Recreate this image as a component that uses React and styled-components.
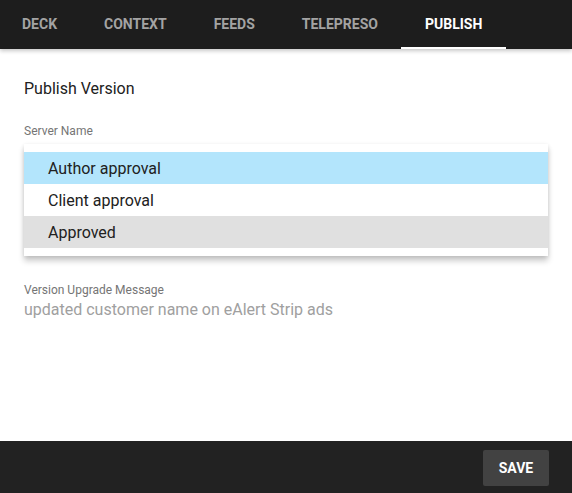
import React from 'react'
import styled, {createGlobalStyle} from 'styled-components'

////////////////////////////// Global page styles
const GlobalStyle = createGlobalStyle`
  html, body {
    margin: 0;
    padding: 0;
    height: 100%;
  }
  body {
    font-family: Roboto, "Liberation Sans", Arial, sans-serif;
    background: #ffffff;
  }
  #root {
    height: 100%;
  }
`

////////////////////////////// Layout parts
const Page = styled.div`
  display: flex;
  flex-direction: column;
  height: 100%;
  overflow: hidden;
`

const TabBar = styled.nav`
  display: flex;
  height: 49px;
  background: #1d1d1d;
  box-shadow: 0 2px 4px rgba(0, 0, 0, 0.22);
  position: relative;
  z-index: 2;
  flex-shrink: 0;
`

const Tab = styled.div`
  display: flex;
  align-items: center;
  padding: 1px 23.5px 0 ${p => p.$first ? '22px' : '23.5px'};
  height: 100%;
  box-sizing: border-box;
  font-size: 14px;
  font-weight: 700;
  color: ${p => p.$active ? '#ffffff' : '#a3a3a3'};
  border-bottom: 2px solid ${p => p.$active ? '#ffffff' : 'transparent'};
  cursor: pointer;
`

const Content = styled.main`
  flex: 1;
  padding: 30px 24px 0 24px;
`

const Title = styled.h2`
  margin: 0;
  font-size: 16px;
  line-height: 20px;
  font-weight: 400;
  color: #212121;
`

const FieldLabel = styled.label`
  display: block;
  margin-top: ${p => p.$gap}px;
  font-size: 12px;
  line-height: 16px;
  color: #757575;
`

const Menu = styled.ul`
  list-style: none;
  margin: 5px 0 0 0;
  padding: 8px 0;
  background: #ffffff;
  box-shadow: 0 5px 6px rgba(0, 0, 0, 0.2), 0 1px 4px rgba(0, 0, 0, 0.1);
`

const MenuItem = styled.li`
  display: flex;
  align-items: center;
  height: 32px;
  padding: 0 24px;
  font-size: 16px;
  color: #212121;
  background: ${p => p.$selected ? '#b3e5fc' : p.$hover ? '#e0e0e0' : 'transparent'};
  cursor: pointer;
`

const MessageText = styled.div`
  margin-top: 2px;
  font-size: 16px;
  line-height: 20px;
  color: #a0a0a0;
`

const Footer = styled.footer`
  display: flex;
  justify-content: flex-end;
  align-items: flex-start;
  height: 52px;
  padding: 9px 23px 0 0;
  box-sizing: border-box;
  background: #222222;
  flex-shrink: 0;
`

const SaveButton = styled.button`
  width: 66px;
  height: 36px;
  border: none;
  border-radius: 2px;
  background: #424242;
  color: #ffffff;
  font-family: inherit;
  font-size: 14px;
  font-weight: 700;
  cursor: pointer;
`

////////////////////////////// Component itself
const tabs = ['DECK', 'CONTEXT', 'FEEDS', 'TELEPRESO', 'PUBLISH']
const options = ['Author approval', 'Client approval', 'Approved']

export default function App() {
  const [activeTab, setActiveTab] = React.useState('PUBLISH')
  const [selected, setSelected] = React.useState('Author approval')
  const [hovered, setHovered] = React.useState('Approved')

  return (
    <>
      <GlobalStyle />
      <Page>
        <TabBar>
          {tabs.map((t, i) => (
            <Tab
              key={t}
              $first={i === 0}
              $active={activeTab === t}
              onClick={() => setActiveTab(t)}
            >
              {t}
            </Tab>
          ))}
        </TabBar>
        <Content>
          <Title>Publish Version</Title>
          <FieldLabel $gap={24}>Server Name</FieldLabel>
          <Menu>
            {options.map(o => (
              <MenuItem
                key={o}
                $selected={selected === o}
                $hover={hovered === o}
                onClick={() => setSelected(o)}
                onMouseEnter={() => setHovered(o)}
              >
                {o}
              </MenuItem>
            ))}
          </Menu>
          <FieldLabel $gap={26}>Version Upgrade Message</FieldLabel>
          <MessageText>updated customer name on eAlert Strip ads</MessageText>
        </Content>
        <Footer>
          <SaveButton>SAVE</SaveButton>
        </Footer>
      </Page>
    </>
  )
}
